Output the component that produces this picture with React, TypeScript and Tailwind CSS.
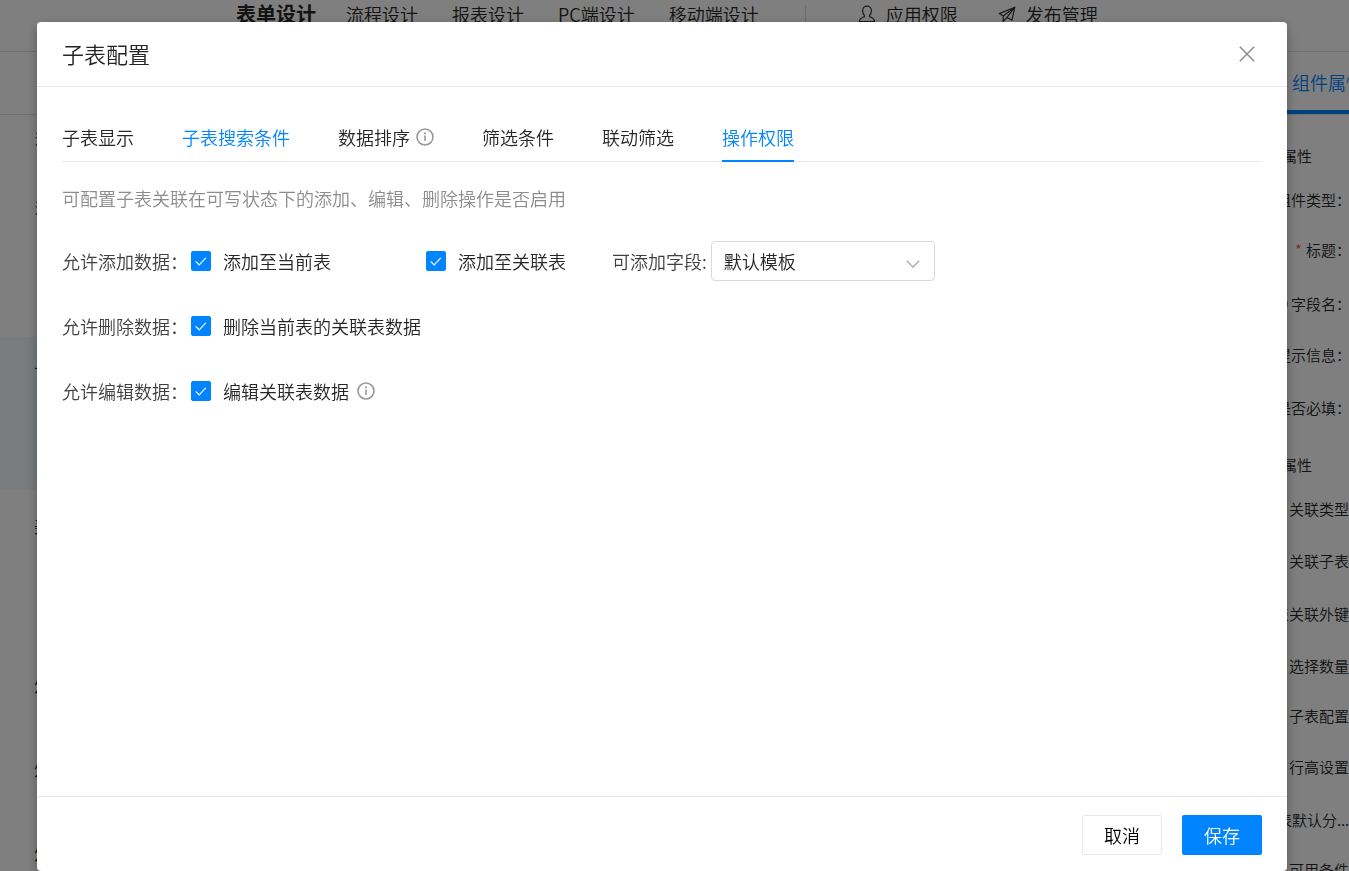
import React, { useState } from "react"
import clsx from "clsx"

const designTabs = ["流程设计", "报表设计", "PC端设计", "移动端设计"]

const formItems = [
  { label: "多行文本", className: "h-[69px] pt-[7px]" },
  { label: "多选框", className: "h-[153px] pt-[7px]" },
  { label: "子表", className: "h-[153px] bg-[#f0f8ff] pt-4" },
  { label: "美化", className: "h-[159px] pt-[21px]" },
  { label: "外键", className: "h-[84px] pt-[21px]" },
  { label: "外键", className: "h-[84px] pt-[21px]" },
  { label: "外键", className: "h-[84px] pt-[21px]" },
]

const settingTabs = [
  { label: "子表显示" },
  { label: "子表搜索条件", highlight: true },
  { label: "数据排序", info: true },
  { label: "筛选条件" },
  { label: "联动筛选" },
  { label: "操作权限" },
]

const InfoIcon = () => (
  <svg viewBox="0 0 18 18" className="size-[18px] shrink-0" fill="none" stroke="#999">
    <circle cx="9" cy="9" r="8" strokeWidth="1.6" />
    <path d="M9 7.600v5.400" strokeWidth="1.600" />
    <circle cx="9" cy="5.300" r="1" fill="#999" stroke="none" />
  </svg>
)

const UserIcon = () => (
  <svg viewBox="0 0 18 18" className="size-[18px]" fill="none" stroke="#333" strokeWidth="1.2">
    <path d="M6.400 10.200C5 9 4.600 7.400 4.600 5.500C4.600 3 6.500 1.200 9 1.200s4.400 1.800 4.400 4.300c0 1.900-.4 3.500-1.800 4.700v1.400c2 .9 4.900 1.500 5 5H1.400c.1-3.500 3-4.100 5-5z" />
  </svg>
)

const SendIcon = () => (
  <svg viewBox="0 0 18 18" className="size-[18px]" fill="none" stroke="#333" strokeWidth="1.2" strokeLinejoin="round">
    <path d="M16.800 2.200L1.200 8.600l4 2.300zM16.800 2.200L14 15.200l-5-2.800zM5.200 10.900v5.600l3.800-4.100" />
  </svg>
)

const CheckItem = ({ label, className }: { label: string; className?: string }) => {
  const [checked, setChecked] = useState(true)
  return (
    <label className={clsx("flex items-center gap-3 text-[#262626]", className)}>
      <span className="relative flex size-5 shrink-0">
        <input
          type="checkbox"
          checked={checked}
          onChange={(e) => setChecked(e.target.checked)}
          className="size-5 appearance-none rounded-[2px] border border-[#d9d9d9] checked:border-[#0084ff] checked:bg-[#0084ff]"
        />
        {checked && (
          <svg viewBox="0 0 20 20" className="pointer-events-none absolute inset-0 size-5" fill="none" stroke="#fff" strokeWidth="1.2">
            <path d="M4.700 10.300l3.500 3.500 6.600-6.900" />
          </svg>
        )}
      </span>
      {label}
    </label>
  )
}

const FieldRow = ({ label, children }: { label: string; children: React.ReactNode }) => (
  <div className="flex h-10 items-center">
    <span className="w-[129px] shrink-0 text-[#404040]">{label}：</span>
    {children}
  </div>
)

const PropRow = ({ className, children }: { className?: string; children: React.ReactNode }) => (
  <div className={clsx("flex items-center justify-end whitespace-nowrap", className)}>{children}</div>
)

const Designer = () => (
  <div className="flex h-screen flex-col overflow-hidden bg-white text-[#262626]">
    <header className="flex h-[52px] shrink-0 items-start border-b border-[#d9d9d9] pt-px pl-[236px] text-lg leading-[26px]">
      <strong className="mr-[30px] text-xl leading-[26px] font-bold">表单设计</strong>
      <nav className="flex gap-[34px]">
        {designTabs.map((el) => (
          <a key={el} href="#" className="whitespace-nowrap">
            {el}
          </a>
        ))}
      </nav>
      <span className="mt-1 ml-[46px] h-5 w-px bg-[#d9d9d9]" />
      <a href="#" className="ml-[52px] flex items-center gap-[10px] whitespace-nowrap">
        <UserIcon />
        应用权限
      </a>
      <a href="#" className="ml-10 flex items-center gap-[10px] whitespace-nowrap">
        <SendIcon />
        发布管理
      </a>
    </header>
    <div className="flex h-[63px] shrink-0 items-stretch justify-between border-b border-[#e0e0e0]">
      <span />
      <div className="flex w-[100px] items-center overflow-hidden border-b-4 border-[#0084ff] pt-[2px] pl-[43px] text-lg whitespace-nowrap text-[#0084ff]">
        组件属性
      </div>
    </div>
    <div className="flex min-h-0 flex-1">
      <div className="flex-1 overflow-hidden text-lg">
        {formItems.map((el, i) => (
          <div key={i} className={clsx("pl-[34px]", el.className)}>
            {el.label}
          </div>
        ))}
      </div>
      <aside className="w-[100px] shrink-0 overflow-hidden text-[15px] leading-6">
        <div className="flex flex-col">
          <PropRow className="mt-[29px] pr-[37px]">基本属性</PropRow>
          <PropRow className="-mr-[2px] mt-5">组件类型：</PropRow>
          <PropRow className="-mr-[2px] mt-[26px]">
            <span className="mr-1 text-[#ff4d4f]">*</span>标题：
          </PropRow>
          <PropRow className="-mr-[2px] mt-[30px]">
            <span className="mr-[3px] size-[14px] rounded-full bg-[#00b96b]" />
            字段名：
          </PropRow>
          <PropRow className="-mr-[2px] mt-[27px]">提示信息：</PropRow>
          <PropRow className="-mr-[2px] mt-[29px]">是否必填：</PropRow>
          <PropRow className="mt-[33px] pr-[37px]">高级属性</PropRow>
          <PropRow className="mt-5">关联类型</PropRow>
          <PropRow className="mt-7">关联子表</PropRow>
          <PropRow className="mt-[29px]">子表关联外键</PropRow>
          <PropRow className="mt-7">选择数量</PropRow>
          <PropRow className="mt-[26px]">子表配置</PropRow>
          <PropRow className="mt-[27px]">行高设置</PropRow>
          <PropRow className="mt-[29px]">子表默认分...</PropRow>
          <PropRow className="mt-[26px]">可用条件</PropRow>
        </div>
      </aside>
    </div>
  </div>
)

const App = () => {
  const [activeTab, setActiveTab] = useState("操作权限")

  return (
    <div className="font-['Noto_Sans_CJK_SC',sans-serif] font-[350]">
      <Designer />
      <div className="fixed inset-0 flex bg-black/50 pt-[22px] pr-[62px] pl-[37px]">
        <div
          role="dialog"
          aria-labelledby="dialog-title"
          className="flex flex-1 flex-col rounded bg-white text-lg shadow-[0_4px_12px_rgba(0,0,0,0.3)]"
        >
          <div className="flex h-[65px] shrink-0 items-center justify-between border-b border-[#e8e8e8] pr-8 pl-[25px]">
            <h2 id="dialog-title" className="pb-[2px] text-[22px] text-[#262626]">
              子表配置
            </h2>
            <button type="button" aria-label="关闭" className="flex size-4 items-center justify-center">
              <svg viewBox="0 0 16 16" className="size-4" fill="none" stroke="#8c8c8c" strokeWidth="1.5">
                <path d="M.8.8l14.400 14.400M15.200.8L.8 15.200" />
              </svg>
            </button>
          </div>
          <div className="flex-1 px-[25px] pt-[26px]">
            <div role="tablist" className="flex h-[49px] gap-12 border-b border-[#e8e8e8]">
              {settingTabs.map((el) => (
                <button
                  key={el.label}
                  type="button"
                  role="tab"
                  aria-selected={activeTab === el.label}
                  onClick={() => setActiveTab(el.label)}
                  className={clsx(
                    "-mb-px flex items-center gap-[6px] border-b-2 whitespace-nowrap",
                    activeTab === el.label ? "border-[#0084ff]" : "border-transparent",
                    activeTab === el.label || el.highlight ? "text-[#0084ff]" : "text-[#262626]",
                  )}
                >
                  {el.label}
                  {el.info && <InfoIcon />}
                </button>
              ))}
            </div>
            <p className="mt-[22px] leading-7 text-[#8c8c8c]">
              可配置子表关联在可写状态下的添加、编辑、删除操作是否启用
            </p>
            <div className="mt-[29px] flex flex-col gap-[25px]">
              <FieldRow label="允许添加数据">
                <CheckItem label="添加至当前表" className="w-[235px]" />
                <CheckItem label="添加至关联表" />
                <label htmlFor="field-template" className="mr-1 ml-[46px] text-[#404040]">
                  可添加字段:
                </label>
                <div className="relative">
                  <select
                    id="field-template"
                    className="h-10 w-[224px] appearance-none rounded border border-[#d9d9d9] bg-white px-3 text-[#262626]"
                  >
                    <option>默认模板</option>
                  </select>
                  <svg viewBox="0 0 14 8" className="pointer-events-none absolute top-[19px] right-[15px] h-2 w-[14px]" fill="none" stroke="#a6a6a6" strokeWidth="1.3">
                    <path d="M.8.8L7 7.100 13.200.8" />
                  </svg>
                </div>
              </FieldRow>
              <FieldRow label="允许删除数据">
                <CheckItem label="删除当前表的关联表数据" />
              </FieldRow>
              <FieldRow label="允许编辑数据">
                <CheckItem label="编辑关联表数据" className="mr-2" />
                <InfoIcon />
              </FieldRow>
            </div>
          </div>
          <div className="flex h-[75px] shrink-0 items-start justify-end gap-5 border-t border-[#e8e8e8] px-[25px] pt-[18px]">
            <button type="button" className="h-10 w-20 rounded-[2px] border border-[#e8e8e8] text-black">
              取消
            </button>
            <button type="button" className="h-10 w-20 rounded-[2px] bg-[#0084ff] text-white">
              保存
            </button>
          </div>
        </div>
      </div>
    </div>
  )
}

export default App
